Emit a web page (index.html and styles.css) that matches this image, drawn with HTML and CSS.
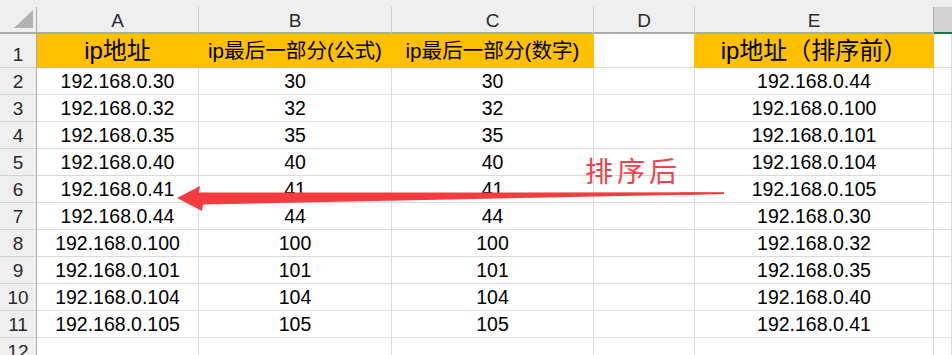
FILE: index.html
```html
<!DOCTYPE html>
<html lang="zh">
<head>
<meta charset="utf-8">
<link rel="stylesheet" href="styles.css">
</head>
<body>
<div class="sheet">
  <div class="strip"></div>
  <div class="grid">
    <div class="ch corner"><span class="tri"></span></div>
    <div class="ch">A</div>
    <div class="ch">B</div>
    <div class="ch">C</div>
    <div class="ch">D</div>
    <div class="ch">E</div>
    <div class="ch chf"></div>

    <div class="rh r1">1</div>
    <div class="c h1 big">ip地址</div>
    <div class="c h1 mid">ip最后一部分(公式)</div>
    <div class="c h1 mid">ip最后一部分(数字)</div>
    <div class="c h1d"></div>
    <div class="c h1 big">ip地址（排序前）</div>
    <div class="c"></div>

    <div class="rh">2</div><div class="c">192.168.0.30</div><div class="c">30</div><div class="c">30</div><div class="c"></div><div class="c">192.168.0.44</div><div class="c"></div>
    <div class="rh">3</div><div class="c">192.168.0.32</div><div class="c">32</div><div class="c">32</div><div class="c"></div><div class="c">192.168.0.100</div><div class="c"></div>
    <div class="rh">4</div><div class="c">192.168.0.35</div><div class="c">35</div><div class="c">35</div><div class="c"></div><div class="c">192.168.0.101</div><div class="c"></div>
    <div class="rh">5</div><div class="c">192.168.0.40</div><div class="c">40</div><div class="c">40</div><div class="c"></div><div class="c">192.168.0.104</div><div class="c"></div>
    <div class="rh">6</div><div class="c">192.168.0.41</div><div class="c">41</div><div class="c">41</div><div class="c"></div><div class="c">192.168.0.105</div><div class="c"></div>
    <div class="rh">7</div><div class="c">192.168.0.44</div><div class="c">44</div><div class="c">44</div><div class="c"></div><div class="c">192.168.0.30</div><div class="c"></div>
    <div class="rh">8</div><div class="c">192.168.0.100</div><div class="c">100</div><div class="c">100</div><div class="c"></div><div class="c">192.168.0.32</div><div class="c"></div>
    <div class="rh">9</div><div class="c">192.168.0.101</div><div class="c">101</div><div class="c">101</div><div class="c"></div><div class="c">192.168.0.35</div><div class="c"></div>
    <div class="rh">10</div><div class="c">192.168.0.104</div><div class="c">104</div><div class="c">104</div><div class="c"></div><div class="c">192.168.0.40</div><div class="c"></div>
    <div class="rh">11</div><div class="c">192.168.0.105</div><div class="c">105</div><div class="c">105</div><div class="c"></div><div class="c">192.168.0.41</div><div class="c"></div>
    <div class="rh">12</div><div class="c"></div><div class="c"></div><div class="c"></div><div class="c"></div><div class="c"></div><div class="c"></div>
  </div>

  <svg class="arrow" width="952" height="355" viewBox="0 0 952 355">
    <defs>
      <linearGradient id="fade" gradientUnits="userSpaceOnUse" x1="680" y1="0" x2="724" y2="0">
        <stop offset="0" stop-color="#f23c3f" stop-opacity="1"/>
        <stop offset="1" stop-color="#f23c3f" stop-opacity="0.25"/>
      </linearGradient>
    </defs>
    <polygon points="177,198 200,186 199,192.5 724,192.3 724,194 203,204.5 202,211" fill="#f23c3f"/>
    <polygon points="680,192.3 724,192.3 724,194 680,195" fill="url(#fade)"/>
  </svg>
  <div class="note">排序后</div>
</div>
</body>
</html>
```

FILE: styles.css
```css
* { box-sizing: border-box; }
html, body {
  margin: 0;
  padding: 0;
  width: 952px;
  height: 355px;
  overflow: hidden;
  background: #ffffff;
}
.sheet {
  position: relative;
  width: 952px;
  height: 355px;
  font-family: "Liberation Sans", "Noto Sans CJK SC", sans-serif;
  color: #000;
}
.strip {
  height: 7px;
  background: #efefef;
}
.grid {
  display: grid;
  grid-template-columns: 37px 162px 193px 202px 101px 239px 1fr;
  grid-template-rows: 27px 34px repeat(11, 27px);
}
.ch {
  background: #efefef;
  border-right: 1px solid #cbcbcb;
  border-bottom: 2px solid #ababab;
  display: flex;
  align-items: flex-end;
  justify-content: center;
  font-size: 19px;
  color: #2a2a2a;
  line-height: 22px;
  padding-bottom: 0;
}
.corner {
  position: relative;
  border-right-color: #ababab;
}
.tri {
  position: absolute;
  left: 14px;
  top: 3px;
  width: 0;
  height: 0;
  border-left: 19px solid transparent;
  border-bottom: 18px solid #b2b2b2;
}
.chf {
  background: #d2d2d2;
  border-bottom: 2px solid #217346;
  border-right: none;
}
.ch:nth-child(6) { border-right-color: #ababab; }
.rh {
  background: #efefef;
  border-right: 1px solid #ababab;
  border-bottom: 1px solid #d2d2d2;
  display: flex;
  align-items: flex-end;
  justify-content: center;
  font-size: 19px;
  color: #2a2a2a;
  line-height: 22px;
  padding-bottom: 1px;
}
.c {
  border-right: 1px solid #dadada;
  border-bottom: 1px solid #dadada;
  display: flex;
  align-items: flex-end;
  justify-content: center;
  font-size: 19.5px;
  line-height: 22px;
  padding-bottom: 2px;
  white-space: nowrap;
  overflow: hidden;
}
.h1 {
  background: #ffc000;
  border-color: #ffc000;
}
.h1d {
  border-right-color: #ffc000;
}
.big {
  font-size: 24px;
  line-height: 28px;
  padding-bottom: 2px;
}
.mid {
  font-size: 20.6px;
  line-height: 26px;
  padding-bottom: 3px;
}
.arrow {
  position: absolute;
  left: 0;
  top: 0;
  pointer-events: none;
}
.note {
  position: absolute;
  left: 585px;
  top: 155px;
  font-family: "Noto Sans CJK SC", sans-serif;
  font-size: 28px;
  line-height: 30px;
  letter-spacing: 4px;
  color: #f0444a;
}
```
